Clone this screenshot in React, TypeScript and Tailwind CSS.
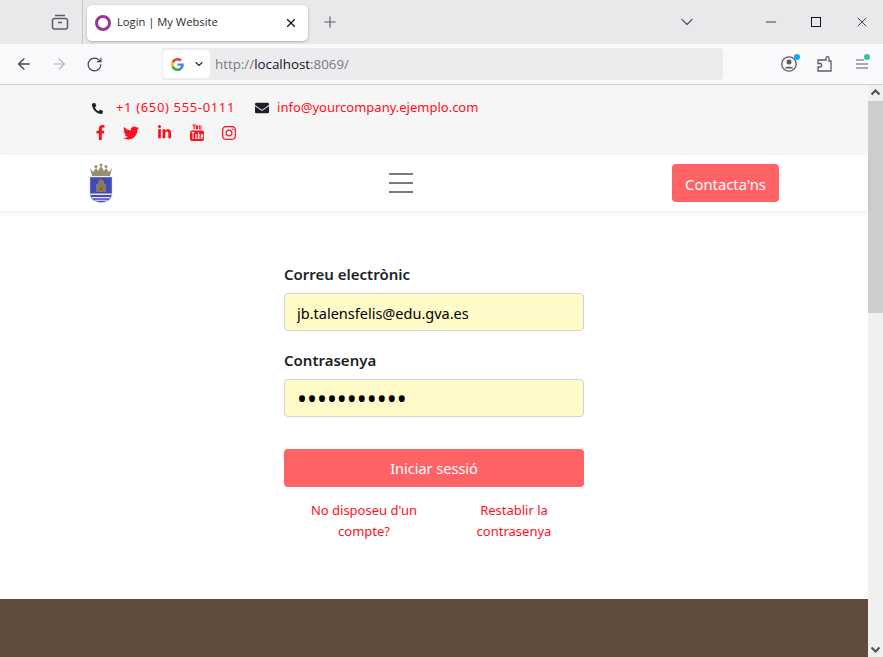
import { ArrowLeft, ArrowRight, ChevronDown, Minus, Plus, RotateCw, X } from "lucide-react";
import { FaEnvelope, FaFacebookF, FaInstagram, FaLinkedinIn, FaPhoneAlt, FaTwitter } from "react-icons/fa";

function Crest() {
  return (
    <svg width="26" height="40" viewBox="0 0 26 40">
      <path d="M2 5l3 4 3-4 2 3 3-5 3 5 2-3 3 4 3-4-2 8H4z" fill="#9a8e70" />
      <circle cx="8" cy="3.500" r="1.500" fill="#9a8e70" />
      <circle cx="13" cy="2" r="1.500" fill="#9a8e70" />
      <circle cx="18" cy="3.500" r="1.500" fill="#9a8e70" />
      <path d="M2 14h22v16c0 6-5 9.500-11 9.500S2 36 2 30z" fill="#4349b8" stroke="#c9c9d6" strokeWidth="0.5" />
      <path d="M8 29V21h2v-3l3-2 3 2v3h2v8z" fill="#857a5e" />
      <rect x="12" y="25" width="2" height="2" fill="#b33a3a" />
      <path d="M2.500 30.500h21v1.500h-21zM4 34h18v1.300H4zM7 36.700h12v1H7z" fill="#e8e8f2" />
    </svg>
  );
}

function YoutubeIcon() {
  return (
    <svg width="14" height="17" viewBox="0 0 14 17" fill="#ff0f1b">
      <path d="M2.400 0h1l.7 2.200L4.800 0h1L4.600 3.300V5.400h-1V3.300zM7 1.200c.9 0 1.200.5 1.200 1.100v2c0 .7-.4 1.200-1.200 1.200S5.800 5 5.800 4.300v-2c0-.6.4-1.100 1.200-1.100zM9 1.300h.9v3.200c0 .2.300.2.600-.1V1.300h.9v4.100h-.9V5c-.7.7-1.500.6-1.500-.3z" />
      <path fillRule="evenodd" d="M2 6.500h10a2 2 0 0 1 2 2V15a2 2 0 0 1-2 2H2a2 2 0 0 1-2-2V8.500a2 2 0 0 1 2-2zM1.500 8v1h1v6h1V9h1V8zM5 10v4.500c0 .6.800.6 1.500 0v.5h.8v-5h-.8v3.800c-.3.300-.7.300-.7 0V10zM8 8v7h.8v-.4c.7.700 1.500.4 1.500-.4v-3c0-1-.8-1.200-1.500-.6V8zm.8 3.300c.3-.3.700-.2.700.2v2.500c0 .4-.4.500-.7.200zM11 11v3c0 1.300 2.300 1.300 2.300-.2h-.8c0 .7-.7.7-.7.100v-1h1.500v-1.900c0-1.400-2.300-1.400-2.300 0zm.8.100c0-.6.700-.6.700 0v.6h-.7z" />
    </svg>
  );
}

export default function App() {
  return (
    <div className="h-screen overflow-hidden flex flex-col bg-white font-['Noto_Sans','Open_Sans',sans-serif]">
      {/* tab strip */}
      <div className="h-[44px] shrink-0 bg-[#e9e9ec] flex items-center pr-[6px]">
        <div className="w-[83px] h-full flex items-center justify-end pr-[13px] border-r border-[#c5c5c8]">
          <svg width="18" height="18" viewBox="0 0 18 18" fill="none" stroke="#5b5b66" strokeWidth="1.5">
            <rect x="1.500" y="5.500" width="15" height="10.500" rx="2" />
            <path d="M4 2.500h10M7 9.500h4" />
          </svg>
        </div>
        <div className="ml-1 w-[221px] h-[36px] mt-[1px] bg-white rounded-[5px] shadow-[0_1px_3px_rgba(0,0,0,0.25)] flex items-center pl-2 pr-[10px]">
          <div className="w-4 h-4 rounded-full border-[3px] border-[#953b8f]" />
          <span className="ml-[6px] flex-1 text-[11.200px] text-[#2b2a33] font-['Open_Sans',sans-serif]">Login | My Website</span>
          <X size={14} strokeWidth={2} color="#15141a" />
        </div>
        <Plus size={18} strokeWidth={1.500} color="#5b5b66" className="ml-[13px]" />
        <div className="flex-1" />
        <ChevronDown size={20} strokeWidth={1.500} color="#5b5b66" className="mr-[66px]" />
        <Minus size={16} strokeWidth={1.200} color="#15141a" className="mr-[32px]" />
        <div className="w-[10px] h-[10px] border border-[#15141a] mr-[33px]" />
        <X size={16} strokeWidth={1.200} color="#15141a" className="mr-[7px]" />
      </div>

      {/* toolbar */}
      <div className="h-[41px] shrink-0 bg-[#f9f9fb] border-b border-[#cfcfd8] flex items-center">
        <div className="w-[162px] flex items-center pl-[15px] gap-[17px]">
          <ArrowLeft size={18} strokeWidth={1.700} color="#45454f" />
          <ArrowRight size={18} strokeWidth={1.500} color="#b4b4ba" />
          <RotateCw size={17} strokeWidth={1.700} color="#45454f" className="ml-[1px]" />
        </div>
        <div className="w-[561px] h-[32px] rounded-[4px] bg-[#ececef] flex items-center text-[14px] text-[#7a7a80]">
          <div className="w-[47px] h-[28px] ml-[1px] bg-white rounded-[4px] flex items-center pl-2 gap-[9px]">
            <svg width="13" height="13" viewBox="0 0 48 48">
              <path fill="#EA4335" d="M24 9.500c3.500 0 6.700 1.300 9.200 3.400l6.900-6.900C35.900 2.400 30.300 0 24 0 14.600 0 6.500 5.400 2.600 13.200l8 6.200C12.500 13.600 17.800 9.500 24 9.500z" />
              <path fill="#4285F4" d="M47 24.500c0-1.600-.2-3.200-.4-4.500H24v9h13c-.6 3-2.300 5.500-4.900 7.200l7.700 6C44.300 38 47 31.800 47 24.500z" />
              <path fill="#FBBC05" d="M10.500 28.600A14.500 14.500 0 0 1 10.500 19.400l-8-6.200a24 24 0 0 0 0 21.600z" />
              <path fill="#34A853" d="M24 48c6.500 0 11.900-2.100 15.900-5.800l-7.700-6c-2.200 1.500-5 2.300-8.200 2.300-6.200 0-11.500-4.200-13.400-9.800l-8 6.200C6.500 42.600 14.600 48 24 48z" />
            </svg>
            <ChevronDown size={12} strokeWidth={2.200} color="#2b2a33" />
          </div>
          <span className="ml-[5px] font-['Open_Sans',sans-serif] text-[13.350px]">
            http://<span className="text-[#15141a]">localhost</span>:8069/
          </span>
        </div>
        <div className="flex-1 flex items-center pl-[58px] gap-[20px]">
          <div className="relative">
            <svg width="16" height="16" viewBox="0 0 16 16" fill="none" stroke="#5b5b66" strokeWidth="1.300">
              <circle cx="8" cy="8" r="7.200" />
              <circle cx="8" cy="6" r="2.500" fill="#5b5b66" stroke="none" />
              <path d="M3.500 12.500c1-2.500 8-2.500 9 0z" fill="#5b5b66" stroke="none" />
            </svg>
            <div className="absolute -top-[2px] -right-[3px] w-[6px] h-[6px] rounded-full bg-[#0fa8f5]" />
          </div>
          <svg width="15" height="16" viewBox="0 0 15 16" fill="none" stroke="#5b5b66" strokeWidth="1.300">
            <path d="M5.500 4H9V2.200a1.500 1.500 0 0 1 3 0V5h2v10H1v-4h2a1.500 1.500 0 0 0 0-3.500H1V4z" />
          </svg>
          <div className="relative ml-[3px]">
            <svg width="13" height="12" viewBox="0 0 13 12" stroke="#5b5b66" strokeWidth="1.200">
              <path d="M1 2h8M1 6h12M1 10h12" />
            </svg>
            <div className="absolute -top-[4px] -right-[2px] w-[6px] h-[6px] rounded-full bg-[#2bc5a0]" />
          </div>
        </div>
      </div>

      <div className="flex-1 min-h-0 flex">
        {/* page */}
        <div className="flex-1 min-w-0 flex flex-col text-[#ff0f1b]">
          <div className="h-[70px] shrink-0 bg-[#f6f6f6] pl-[92px] pt-[13px]">
            <div className="flex items-center h-[20px] text-[13px]">
              <FaPhoneAlt size={11} className="text-[#1c1f26]" />
              <span className="ml-[13px] tracking-[0.65px]">+1 (650) 555-0111</span>
              <FaEnvelope size={14} className="ml-[20px] text-[#1c1f26]" />
              <span className="ml-2">info@yourcompany.ejemplo.com</span>
            </div>
            <div className="flex items-center h-[17px] mt-[6px] ml-[1px]">
              <FaFacebookF size={15} />
              <FaTwitter size={16} className="ml-[15px]" />
              <FaLinkedinIn size={15} className="ml-[18px]" />
              <div className="ml-[18px]"><YoutubeIcon /></div>
              <FaInstagram size={16} className="ml-[17px]" />
            </div>
          </div>

          <div className="relative h-[56px] shrink-0 bg-white shadow-[0_2px_4px_rgba(0,0,0,0.08)] flex items-center pl-[88px]">
            <Crest />
            <div className="ml-[275px] flex flex-col gap-[7px]">
              <div className="w-[24px] h-[2px] bg-[#7b7b7b]" />
              <div className="w-[24px] h-[2px] bg-[#7b7b7b]" />
              <div className="w-[24px] h-[2px] bg-[#7b7b7b]" />
            </div>
            <button className="ml-[259px] w-[107px] h-[38px] pt-[2px] rounded-[4px] bg-[#ff6366] text-white text-[14.800px]">
              Contacta'ns
            </button>
          </div>

          <div className="flex-1 min-h-0">
            <form className="w-[300px] ml-[284px] mt-[52px]">
              <label className="block text-[15px] leading-[22px] font-semibold text-[#1c1f26]">Correu electrònic</label>
              <input
                readOnly
                value="jb.talensfelis@edu.gva.es"
                className="block mt-[8px] w-full h-[38px] px-3 pt-[1px] rounded-[4px] border border-[#cfd4da] bg-[#fffbc8] text-[14.500px] text-black outline-none"
              />
              <label className="block mt-[18px] text-[15px] leading-[22px] font-semibold text-[#1c1f26]">Contrasenya</label>
              <input
                readOnly
                type="password"
                value="abcdefghijk"
                className="block mt-[8px] w-full h-[38px] px-3 pt-[4px] rounded-[4px] border border-[#cfd4da] bg-[#fffbc8] text-[26.500px] text-black outline-none"
              />
              <button type="button" className="block mt-[32px] w-full h-[38px] pt-[2px] rounded-[4px] bg-[#ff6366] text-white text-[14.500px]">
                Iniciar sessió
              </button>
              <div className="mt-[13px] flex text-[13px] leading-[21px] text-center">
                <a className="w-[160px] px-[20px]">No disposeu d'un compte?</a>
                <a className="w-[140px] px-[30px]">Restablir la contrasenya</a>
              </div>
            </form>
          </div>

          <div className="h-[58px] shrink-0 bg-[#604b3f]" />
        </div>

        {/* scrollbar */}
        <div className="w-[15px] shrink-0 bg-[#f0f0f0] flex flex-col items-center">
          <svg width="15" height="15" viewBox="0 0 15 15" fill="none" stroke="#505050" strokeWidth="2"><path d="M3.500 9.500l4-4 4 4" /></svg>
          <div className="w-full h-[212px] mt-[1px] bg-[#cdcdcd]" />
          <div className="flex-1" />
          <svg width="15" height="15" viewBox="0 0 15 15" fill="none" stroke="#505050" strokeWidth="2"><path d="M3.500 5.500l4 4 4-4" /></svg>
        </div>
      </div>
    </div>
  );
}
